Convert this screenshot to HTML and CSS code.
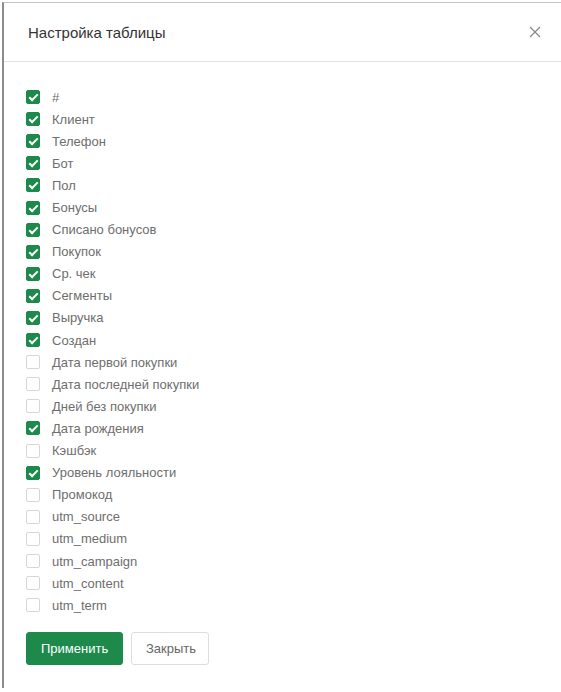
FILE: index.html
```html
<!DOCTYPE html>
<html lang="ru">
  <head>
    <meta charset="UTF-8" />
    <meta name="viewport" content="width=device-width, initial-scale=1.0" />
    <title>Настройка таблицы</title>
    <link rel="stylesheet" href="styles.css">
  </head>
  <body>
    <div class="modal">
      <div class="modal-header">
        <h2 class="modal-title">Настройка таблицы</h2>
        <button class="modal-close" aria-label="Закрыть">
          <svg width="12" height="12" viewBox="0 0 12 12" fill="none" stroke="#8a8a8a" stroke-width="1.2">
            <line x1="1" y1="1" x2="11" y2="11"></line>
            <line x1="11" y1="1" x2="1" y2="11"></line>
          </svg>
        </button>
      </div>

      <div class="modal-body">
        <ul class="columns">
          <li class="col on"><span class="box"></span>#</li>
          <li class="col on"><span class="box"></span>Клиент</li>
          <li class="col on"><span class="box"></span>Телефон</li>
          <li class="col on"><span class="box"></span>Бот</li>
          <li class="col on"><span class="box"></span>Пол</li>
          <li class="col on"><span class="box"></span>Бонусы</li>
          <li class="col on"><span class="box"></span>Списано бонусов</li>
          <li class="col on"><span class="box"></span>Покупок</li>
          <li class="col on"><span class="box"></span>Ср. чек</li>
          <li class="col on"><span class="box"></span>Сегменты</li>
          <li class="col on"><span class="box"></span>Выручка</li>
          <li class="col on"><span class="box"></span>Создан</li>
          <li class="col"><span class="box"></span>Дата первой покупки</li>
          <li class="col"><span class="box"></span>Дата последней покупки</li>
          <li class="col"><span class="box"></span>Дней без покупки</li>
          <li class="col on"><span class="box"></span>Дата рождения</li>
          <li class="col"><span class="box"></span>Кэшбэк</li>
          <li class="col on"><span class="box"></span>Уровень лояльности</li>
          <li class="col"><span class="box"></span>Промокод</li>
          <li class="col"><span class="box"></span>utm_source</li>
          <li class="col"><span class="box"></span>utm_medium</li>
          <li class="col"><span class="box"></span>utm_campaign</li>
          <li class="col"><span class="box"></span>utm_content</li>
          <li class="col"><span class="box"></span>utm_term</li>
        </ul>

        <div class="actions">
          <button class="btn btn-primary">Применить</button>
          <button class="btn btn-default">Закрыть</button>
        </div>
      </div>
    </div>
  </body>
</html>
```

FILE: styles.css
```css
html,
body {
  margin: 0;
  height: 100%;
  background: #fff;
  font-family: 'Liberation Sans', Arial, sans-serif;
}

.modal {
  box-sizing: border-box;
  height: 686px;
  margin: 2px 0 0 2px;
  border-left: 2px solid #8c8c8c;
  border-top: 1px solid #c4c4c4;
  background: #fff;
}

.modal-header {
  display: flex;
  align-items: center;
  justify-content: space-between;
  height: 58px;
  padding: 0 20px 0 24px;
  border-bottom: 1px solid #e3e3e3;
}

.modal-title {
  margin: 0;
  font-size: 15px;
  font-weight: normal;
  color: #333;
}

.modal-close {
  border: 0;
  background: none;
  padding: 0;
  display: flex;
  cursor: pointer;
}

.modal-body {
  padding: 24px 22px 0;
}

.columns {
  list-style: none;
  margin: 0;
  padding: 0;
}

.col {
  display: flex;
  align-items: center;
  height: 22.1px;
  font-size: 13px;
  color: #6e6e6e;
}

/* checkbox */
.box {
  box-sizing: border-box;
  width: 14px;
  height: 14px;
  margin-right: 12px;
  border: 1px solid #d6d6d6;
  border-radius: 2px;
  background: #fff;
  position: relative;
}

.col.on .box {
  border-color: #1d8a4c;
  background: #1d8a4c;
}

.col.on .box::after {
  content: "";
  position: absolute;
  left: 4px;
  top: 1px;
  width: 3px;
  height: 7px;
  border: solid #fff;
  border-width: 0 2px 2px 0;
  transform: rotate(45deg);
}

.actions {
  display: flex;
  gap: 8px;
  margin-top: 16px;
}

.btn {
  height: 33px;
  padding: 0 14px;
  border-radius: 3px;
  font-family: inherit;
  font-size: 13px;
  cursor: pointer;
}

.btn-primary {
  width: 97px;
  border: 1px solid #1d8a4c;
  background: #1d8a4c;
  color: #fff;
}

.btn-default {
  width: 78px;
  border: 1px solid #ddd;
  background: #fff;
  color: #666;
}
```
